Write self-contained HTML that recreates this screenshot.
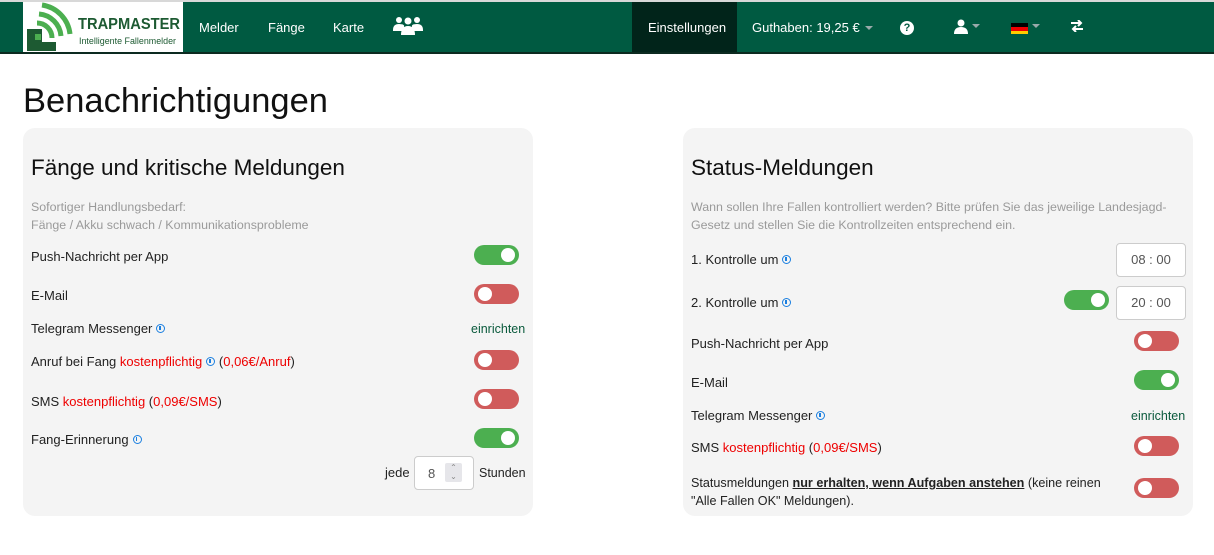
<!DOCTYPE html>
<html><head><meta charset="utf-8"><style>
*{box-sizing:border-box;margin:0;padding:0}
body{width:1214px;height:555px;background:#fff;font-family:"Liberation Sans",sans-serif;color:#222;position:relative;overflow:hidden}
.nav{position:absolute;left:0;top:0;width:1214px;height:54px;background:#005a41;border-top:2px solid #d8d8d8;border-bottom:2px solid #0c2a20}
.n{position:absolute;color:#fff;font-size:13px;line-height:16px;top:18px}
.t{position:absolute;font-size:13px;line-height:16px;white-space:nowrap}
.g{color:#9a9a9a;font-size:12.4px}
.r{color:#e00}
.card{position:absolute;background:#f4f4f4;border-radius:12px}
.tg{position:absolute;width:45px;height:20px;border-radius:10px}
.tg::after{content:"";position:absolute;top:3px;width:14px;height:14px;border-radius:50%;background:#fff}
.on{background:#4caf50}.on::after{right:4px}
.off{background:#d05b5b}.off::after{left:4px}
.i{display:inline-block;width:9px;height:9px;border:1.5px solid #1a7fe0;border-radius:50%;margin-left:4px;vertical-align:0;position:relative}
.i::after{content:"";position:absolute;left:2px;top:1px;width:1.5px;height:4px;background:#1a7fe0}
.box{position:absolute;background:#fff;border:1px solid #ccc;border-radius:4px;font-size:13px;color:#555;text-align:center}
.lk{color:#0a5a3c}
.car{display:inline-block;width:0;height:0;border-left:4px solid transparent;border-right:4px solid transparent;border-top:4px solid #9aa;margin-left:5px;vertical-align:2px}
</style></head><body>
<div class="nav">
 <div style="position:absolute;left:23px;top:0;width:160px;height:50px;background:#fff;overflow:hidden">
  <svg width="160" height="50" viewBox="0 0 160 50">
   <path d="M4 27h15v13h14v9H4z" fill="#1d5a32"/>
   <rect x="12" y="32" width="6" height="6" fill="#4caf50"/>
   <path d="M14 21a15 15 0 0 1 15 15" stroke="#4caf50" stroke-width="5" fill="none"/>
   <path d="M16 12a24 24 0 0 1 22 22" stroke="#4caf50" stroke-width="5" fill="none"/>
   <path d="M19 3a33 33 0 0 1 28 29" stroke="#4caf50" stroke-width="5" fill="none"/>
   <text x="55" y="27" font-family="Liberation Sans" font-weight="bold" font-size="16" textLength="102" lengthAdjust="spacingAndGlyphs" fill="#1d5a32">TRAPMASTER</text>
   <text x="56" y="42" font-family="Liberation Sans" font-size="9" textLength="97" lengthAdjust="spacingAndGlyphs" fill="#1d5a32">Intelligente Fallenmelder</text>
  </svg>
 </div>
 <div class="n" style="left:199px">Melder</div>
 <div class="n" style="left:268px">Fänge</div>
 <div class="n" style="left:333px">Karte</div>
 <svg style="position:absolute;left:393px;top:14px" width="30" height="20" viewBox="0 0 30 20"><g fill="#fff"><circle cx="6" cy="4" r="3"/><circle cx="24" cy="4" r="3"/><circle cx="15" cy="5" r="3.5"/><path d="M0 14q0-6 6-6t5 3v4H0z"/><path d="M30 14q0-6-6-6t-5 3v4h11z"/><path d="M8 19q0-9 7-9t7 9z"/></g></svg>
 <div style="position:absolute;left:632px;top:0;width:105px;height:50px;background:#01241a"></div>
 <div class="n" style="left:648px">Einstellungen</div>
 <div class="n" style="left:752px">Guthaben: 19,25 €<span class="car"></span></div>
 <div style="position:absolute;left:900px;top:19px;width:14px;height:14px;border-radius:50%;background:#fff;color:#005a41;font-size:11px;font-weight:bold;text-align:center;line-height:14px">?</div>
 <svg style="position:absolute;left:954px;top:17px" width="14" height="15" viewBox="0 0 14 15"><circle cx="7" cy="4" r="3.5" fill="#fff"/><path d="M0 15q0-7 7-7t7 7z" fill="#fff"/></svg>
 <span class="car" style="position:absolute;left:967px;top:22px"></span>
 <div style="position:absolute;left:1011px;top:21px;width:17px;height:11px"><div style="height:4px;background:#000"></div><div style="height:4px;background:#e00"></div><div style="height:3px;background:#fc0"></div></div>
 <span class="car" style="position:absolute;left:1027px;top:22px"></span>
 <svg style="position:absolute;left:1070px;top:18px" width="14" height="12" viewBox="0 0 14 12"><path d="M1 3h10M8 0l3 3-3 3M13 9H3M6 6l-3 3 3 3" stroke="#fff" stroke-width="2" fill="none"/></svg>
</div>

<div class="t" style="left:23px;top:81px;font-size:34.5px;line-height:40px;color:#111">Benachrichtigungen</div>

<div class="card" style="left:23px;top:128px;width:510px;height:388px"></div>
<div class="card" style="left:683px;top:128px;width:510px;height:388px"></div>

<div class="t" style="left:31px;top:154px;font-size:22.5px;line-height:27px;color:#111">Fänge und kritische Meldungen</div>
<div class="t g" style="left:31px;top:198px;line-height:18px">Sofortiger Handlungsbedarf:<br>Fänge / Akku schwach / Kommunikationsprobleme</div>
<div class="t" style="left:31px;top:249px">Push-Nachricht per App</div><div class="tg on" style="left:474px;top:245px"></div>
<div class="t" style="left:31px;top:288px">E-Mail</div><div class="tg off" style="left:474px;top:284px"></div>
<div class="t" style="left:31px;top:321px">Telegram Messenger<span class="i"></span></div><div class="t lk" style="left:471px;top:321px;font-size:12.5px">einrichten</div>
<div class="t" style="left:31px;top:354px">Anruf bei Fang <span class="r">kostenpflichtig</span><span class="i"></span> (<span class="r">0,06€/Anruf</span>)</div><div class="tg off" style="left:474px;top:350px"></div>
<div class="t" style="left:31px;top:394px">SMS <span class="r">kostenpflichtig</span> (<span class="r">0,09€/SMS</span>)</div><div class="tg off" style="left:474px;top:389px"></div>
<div class="t" style="left:31px;top:432px">Fang-Erinnerung<span class="i"></span></div><div class="tg on" style="left:474px;top:428px"></div>
<div class="t" style="left:385px;top:465px">jede</div>
<div class="box" style="left:414px;top:456px;width:60px;height:34px;text-align:left;padding:9px 0 0 13px">8<span style="position:absolute;left:30px;top:6px;width:17px;height:19px;background:#e6e6ea;border-radius:2px;font-size:8px;color:#888;line-height:9px;text-align:center">&#8963;<br>&#8964;</span></div>
<div class="t" style="left:479px;top:465px;font-size:12.5px">Stunden</div>

<div class="t" style="left:691px;top:154px;font-size:22.5px;line-height:27px;color:#111">Status-Meldungen</div>
<div class="t g" style="left:691px;top:198px;line-height:18px">Wann sollen Ihre Fallen kontrolliert werden? Bitte prüfen Sie das jeweilige Landesjagd-<br>Gesetz und stellen Sie die Kontrollzeiten entsprechend ein.</div>
<div class="t" style="left:691px;top:252px">1. Kontrolle um<span class="i"></span></div>
<div class="box" style="left:1116px;top:243px;width:70px;height:34px;line-height:32px">08 : 00</div>
<div class="t" style="left:691px;top:295px">2. Kontrolle um<span class="i"></span></div>
<div class="tg on" style="left:1064px;top:290px"></div>
<div class="box" style="left:1116px;top:286px;width:70px;height:34px;line-height:32px">20 : 00</div>
<div class="t" style="left:691px;top:336px">Push-Nachricht per App</div><div class="tg off" style="left:1134px;top:331px"></div>
<div class="t" style="left:691px;top:375px">E-Mail</div><div class="tg on" style="left:1134px;top:370px"></div>
<div class="t" style="left:691px;top:408px">Telegram Messenger<span class="i"></span></div><div class="t lk" style="left:1131px;top:408px;font-size:12.5px">einrichten</div>
<div class="t" style="left:691px;top:440px">SMS <span class="r">kostenpflichtig</span> (<span class="r">0,09€/SMS</span>)</div><div class="tg off" style="left:1134px;top:436px"></div>
<div class="t" style="left:691px;top:474px;line-height:18px;font-size:12.6px">Statusmeldungen <b style="text-decoration:underline">nur erhalten, wenn Aufgaben anstehen</b> (keine reinen<br>"Alle Fallen OK" Meldungen).</div>
<div class="tg off" style="left:1134px;top:478px"></div>
</body></html>
